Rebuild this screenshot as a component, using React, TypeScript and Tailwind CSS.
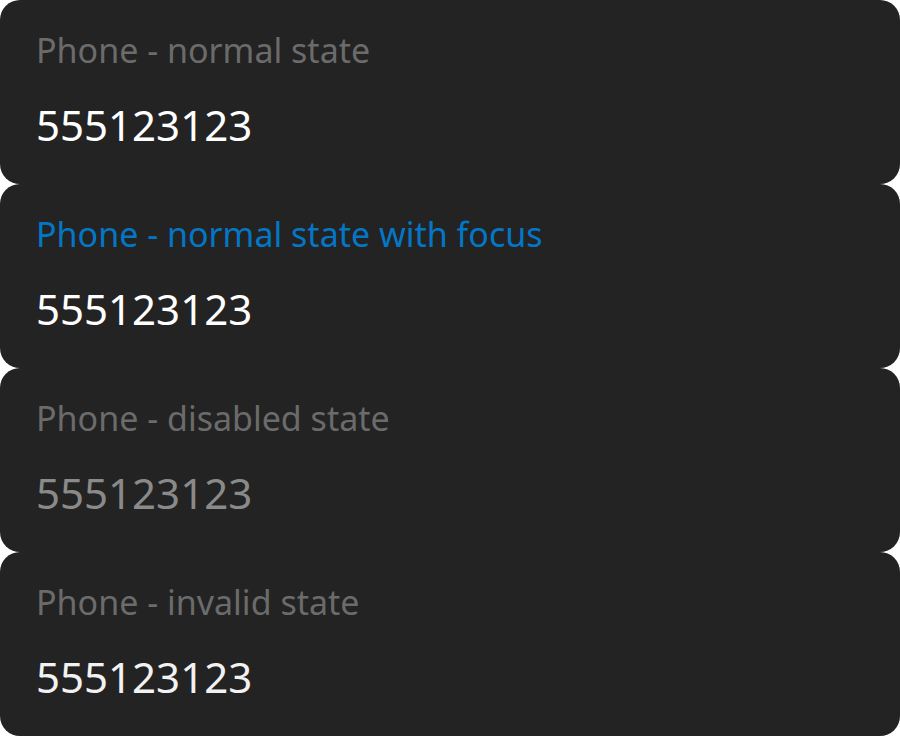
const fields = [
  { label: "Phone - normal state", labelColor: "text-[#6b6b6b]", valueColor: "text-white" },
  { label: "Phone - normal state with focus", labelColor: "text-[#0377c6]", valueColor: "text-white" },
  { label: "Phone - disabled state", labelColor: "text-[#6b6b6b]", valueColor: "text-[#8a8a8a]" },
  { label: "Phone - invalid state", labelColor: "text-[#6b6b6b]", valueColor: "text-[#f2f2f2]" },
];

function PhoneField({ label, labelColor, valueColor }: { label: string; labelColor: string; valueColor: string }) {
  return (
    <div className="h-[184px] rounded-[20px] bg-[#232323] px-[36px] pt-[33px]">
      <div className={`text-[34px] leading-[34px] whitespace-nowrap ${labelColor}`}>{label}</div>
      <div className={`mt-[37px] text-[42px] leading-[42px] ${valueColor}`}>555123123</div>
    </div>
  );
}

export default function App() {
  return (
    <div className="w-[900px] h-[736px] bg-white font-['Noto_Sans',sans-serif]">
      {fields.map((f) => (
        <PhoneField key={f.label} {...f} />
      ))}
    </div>
  );
}
